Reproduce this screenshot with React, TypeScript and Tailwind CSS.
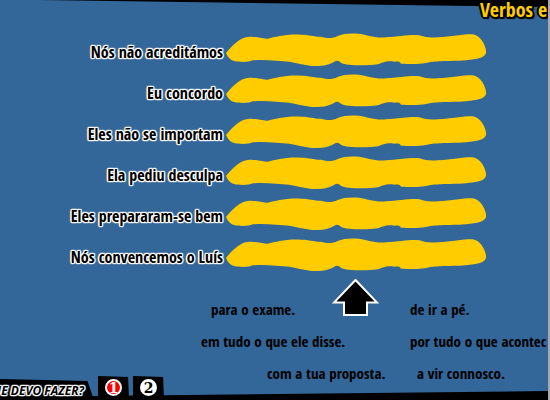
import React, { useState } from "react";

const sentences = [
  "Nós não acreditámos",
  "Eu concordo",
  "Eles não se importam",
  "Ela pediu desculpa",
  "Eles prepararam-se bem",
  "Nós convencemos o Luís",
];

const outlineWhite =
  "[text-shadow:1px_0_1px_#fff,-1px_0_1px_#fff,0_1px_1px_#fff,0_-1px_1px_#fff,1px_1px_1px_#fff,-1px_-1px_1px_#fff,1px_-1px_1px_#fff,-1px_1px_1px_#fff,0_0_2px_#fff]";
const outlineBlack =
  "[text-shadow:2px_0_0_#000,-2px_0_0_#000,0_2px_0_#000,0_-2px_0_#000,1px_1px_0_#000,-1px_-1px_0_#000,1px_-1px_0_#000,-1px_1px_0_#000,2px_2px_1px_#000]";

function Blob() {
  return (
    <svg className="h-[33px] w-[260px] shrink-0 overflow-visible" viewBox="0 0 780 99" aria-hidden="true">
      <path
        fill="#ffcc00"
        d="M0 60C15 40 45 12 65 12C85 8 105 18 125 17C150 12 175 3 225 5C250 5 262 11 285 11C305 17 320 17 335 9C355-1 395 0 415 5C440 11 460 15 480 13C520 10 560 3 580 7C600 13 610 15 635 13C680 10 715 3 740 4C765 6 783 45 780 60C775 75 755 78 720 82C660 86 640 82 600 90C570 95 545 92 525 92C520 86 520 85 505 86C480 83 475 88 455 94C420 99 360 98 345 89C338 82 332 81 325 86C315 92 300 98 280 99C230 100 215 85 150 83C125 81 100 81 80 82C70 88 40 88 25 84C10 80 5 70 0 60Z"
      />
    </svg>
  );
}

function Phrase({ children, className = "" }: { children: string; className?: string }) {
  return (
    <button type="button" className={`h-5 cursor-grab text-left text-[15px] leading-5 whitespace-nowrap ${className}`}>
      {children}
    </button>
  );
}

export default function App() {
  const [page, setPage] = useState(1);
  return (
    <main className="flex min-h-screen flex-col overflow-hidden border-r-2 border-[#a9a9ad] bg-[#336699] font-['Open_Sans_Condensed','Roboto_Condensed',sans-serif] text-base font-bold text-black">
      <header className="relative flex h-[29px] justify-end">
        <svg className="absolute inset-x-0 top-0 h-2 w-full" viewBox="0 0 548 8" preserveAspectRatio="none" aria-hidden="true">
          <path d="M40 0H548V7Z" />
        </svg>
        <h1 className={`relative w-[68px] text-xl leading-5 whitespace-nowrap text-[#ffcc00] ${outlineBlack}`}>Verbos e</h1>
      </header>

      <ul>
        {sentences.map((s) => (
          <li key={s} className="flex h-[41px] items-center gap-[3px]">
            <span className={`w-[223px] shrink-0 pt-1 text-right leading-5 whitespace-nowrap ${outlineWhite}`}>{s}</span>
            <Blob />
          </li>
        ))}
      </ul>

      <section className="flex flex-col gap-3 pt-1">
        <div className="flex h-10 items-end">
          <Phrase className="ml-[211px] w-[121px]">para o exame.</Phrase>
          <svg className="mr-[31px] h-10 w-[47px] shrink-0" viewBox="0 0 47 40" aria-hidden="true">
            <path d="M23.500 1L45 23.500H35V36H12V23.500H2Z" stroke="#fff" strokeWidth="2" />
          </svg>
          <Phrase>de ir a pé.</Phrase>
        </div>
        <div className="flex">
          <Phrase className="ml-[201px] w-[209px] shrink-0">em tudo o que ele disse.</Phrase>
          <Phrase>por tudo o que acontec</Phrase>
        </div>
        <div className="flex">
          <Phrase className="ml-[267px] w-[150px] shrink-0">com a tua proposta.</Phrase>
          <Phrase>a vir connosco.</Phrase>
        </div>
      </section>

      <footer className="relative -mt-[7px] flex h-6 items-end">
        <svg className="absolute inset-x-0 bottom-0 h-[9px] w-full" viewBox="0 0 548 9" preserveAspectRatio="none" aria-hidden="true">
          <path d="M0 6L548 0V9H0Z" />
        </svg>
        <button
          type="button"
          className={`relative flex h-[21px] w-[94px] justify-end bg-black pr-2.5 font-['Open_Sans',sans-serif] text-xs leading-6 font-bold whitespace-nowrap italic [clip-path:polygon(0_0,93%_10%,100%_100%,0_100%)] ${outlineWhite}`}
        >
          UE DEVO FAZER?
        </button>
        <nav className="relative ml-1 flex gap-1">
          {[1, 2].map((n) => (
            <button
              key={n}
              type="button"
              onClick={() => setPage(n)}
              className="flex h-6 w-[31px] justify-center bg-black pt-[3px] [clip-path:polygon(0_0,97%_4%,100%_100%,0_100%)]"
            >
              <span
                className={`flex size-[17px] items-center justify-center rounded-full border-2 border-white font-['DejaVu_Serif',serif] text-sm leading-3 ${
                  n === page ? "bg-[#ff0000] text-white" : "bg-white text-black"
                }`}
              >
                {n}
              </span>
            </button>
          ))}
        </nav>
      </footer>
    </main>
  );
}
